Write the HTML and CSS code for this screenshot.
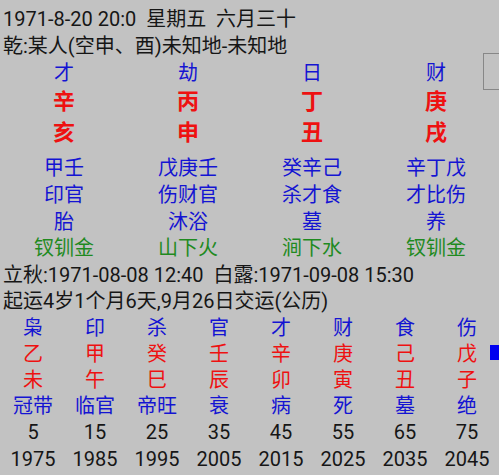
FILE: index.html
```html
<!DOCTYPE html>
<html lang="zh-CN">
<head>
  <meta charset="UTF-8" />
  <meta name="viewport" content="width=device-width, initial-scale=1.0" />
  <title>排盘</title>
  <link rel="stylesheet" href="styles.css">
</head>
<body>
  <div class="page">
    <!-- Header info -->
    <div class="line">1971-8-20 20:0  星期五  六月三十</div>
    <div class="line">乾:某人(空申、酉)未知地-未知地</div>

    <!-- Four pillars -->
    <div class="pillars">
      <div class="prow god"><span>才</span><span>劫</span><span>日</span><span>财</span></div>
      <div class="prow gan"><span>辛</span><span>丙</span><span>丁</span><span>庚</span></div>
      <div class="prow zhi"><span>亥</span><span>申</span><span>丑</span><span>戌</span></div>
      <div class="hidden">
        <div class="prow blue"><span>甲壬</span><span>戊庚壬</span><span>癸辛己</span><span>辛丁戊</span></div>
        <div class="prow blue"><span>印官</span><span>伤财官</span><span>杀才食</span><span>才比伤</span></div>
        <div class="prow blue"><span>胎</span><span>沐浴</span><span>墓</span><span>养</span></div>
        <div class="prow green"><span>钗钏金</span><span>山下火</span><span>涧下水</span><span>钗钏金</span></div>
      </div>
    </div>

    <!-- Terms and luck start -->
    <div class="line low">立秋:1971-08-08 12:40  白露:1971-09-08 15:30</div>
    <div class="line low">起运4岁1个月6天,9月26日交运(公历)</div>

    <!-- Luck cycles -->
    <div class="luck">
      <div class="lrow blue"><span>枭</span><span>印</span><span>杀</span><span>官</span><span>才</span><span>财</span><span>食</span><span>伤</span></div>
      <div class="lrow red"><span>乙</span><span>甲</span><span>癸</span><span>壬</span><span>辛</span><span>庚</span><span>己</span><span>戊</span></div>
      <div class="lrow red"><span>未</span><span>午</span><span>巳</span><span>辰</span><span>卯</span><span>寅</span><span>丑</span><span>子</span></div>
      <div class="lrow blue"><span>冠带</span><span>临官</span><span>帝旺</span><span>衰</span><span>病</span><span>死</span><span>墓</span><span>绝</span></div>
      <div class="lrow"><span>5</span><span>15</span><span>25</span><span>35</span><span>45</span><span>55</span><span>65</span><span>75</span></div>
      <div class="lrow"><span>1975</span><span>1985</span><span>1995</span><span>2005</span><span>2015</span><span>2025</span><span>2035</span><span>2045</span></div>
    </div>

    <div class="box"></div>
    <div class="bar"></div>
  </div>
</body>
</html>
```

FILE: styles.css
```css
/* Page */
html, body {
  margin: 0;
  background-color: #c2c2c2;
}

.page {
  position: relative;
  width: 499px;
  height: 475px;
  overflow: hidden;
  padding: 6px 0 0 2px;
  box-sizing: border-box;
  font-family: Roboto, "Noto Sans CJK SC", sans-serif;
  font-size: 20px;
  color: #161616;
}

/* Plain text lines */
.line {
  height: 27px;
  line-height: 27px;
  padding-left: 1px;
  white-space: pre;
}

.line.low {
  height: 26.2px;
  line-height: 26.2px;
}

/* Pillar rows: 4 columns of 124px */
.prow {
  display: grid;
  grid-template-columns: repeat(4, 124px);
  text-align: center;
  height: 27px;
  line-height: 27px;
}

.god {
  color: #1414d2;
}

.gan,
.zhi {
  color: #ee1111;
  font-size: 22px;
  font-weight: bold;
}

.gan {
  height: 30px;
  line-height: 30px;
}

.zhi {
  height: 31px;
  line-height: 31px;
}

.hidden {
  margin-top: 7px;
}

.hidden .prow {
  height: 26.8px;
  line-height: 26.8px;
}

/* Luck rows: 8 columns of 62px */
.lrow {
  display: grid;
  grid-template-columns: repeat(8, 62px);
  text-align: center;
  height: 26.2px;
  line-height: 26.2px;
}

.blue {
  color: #1414d2;
}

.red {
  color: #ee1111;
}

.green {
  color: #1f8a1f;
}

/* Overlay widgets on the right edge */
.box {
  position: absolute;
  left: 483px;
  top: 53px;
  width: 30px;
  height: 35px;
  border: 1.5px solid #878787;
}

.bar {
  position: absolute;
  left: 490px;
  top: 345px;
  width: 10px;
  height: 15px;
  background-color: #0000f0;
}
```
